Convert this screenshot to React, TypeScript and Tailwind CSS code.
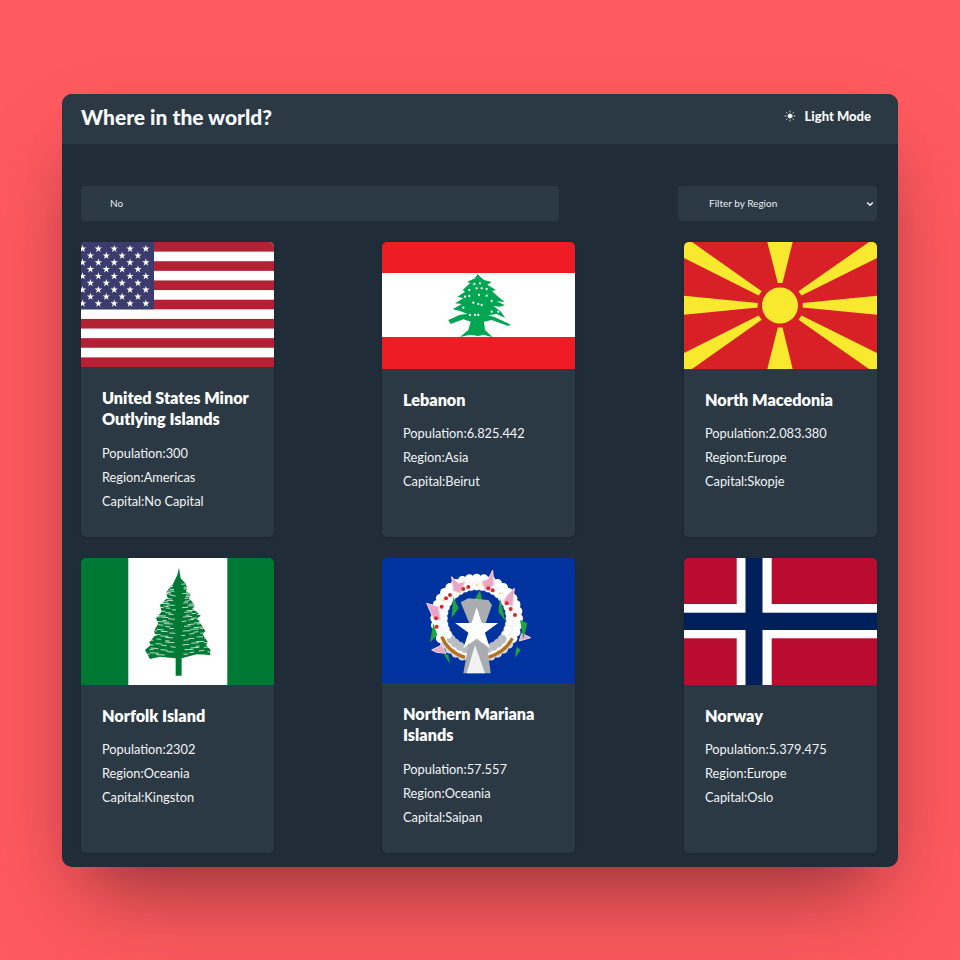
import React from "react";

const font = "[font-family:Lato,'Noto_Sans',sans-serif]";

function star(cx: number, cy: number, r: number) {
  const pts: string[] = [];
  for (let i = 0; i < 10; i++) {
    const rad = i % 2 === 0 ? r : r * 0.382;
    const a = -Math.PI / 2 + (i * Math.PI) / 5;
    pts.push(`${(cx + rad * Math.cos(a)).toFixed(2)},${(cy + rad * Math.sin(a)).toFixed(2)}`);
  }
  return pts.join(" ");
}

function FlagUS() {
  const h = 125 / 13;
  const stars: React.ReactNode[] = [];
  for (let row = 0; row < 9; row++) {
    const cols = row % 2 === 0 ? 6 : 5;
    for (let c = 0; c < cols; c++) {
      const x = (row % 2 === 0 ? -14.3 : -6.4) + c * 15.83;
      stars.push(<polygon key={`${row}-${c}`} points={star(x, 6.83 + row * 6.83, 3.9)} fill="#fff" />);
    }
  }
  return (
    <svg viewBox="0 0 193 125" className="block h-[125px] w-[193px]">
      <rect width="193" height="125" fill="#fff" />
      {Array.from({ length: 7 }).map((_, i) => (
        <rect key={i} y={i * 2 * h} width="193" height={h} fill="#b22234" />
      ))}
      <rect width="73" height="67.3" fill="#3c3b6e" />
      {stars}
    </svg>
  );
}

function FlagLebanon() {
  const dots = [
    [283, 132], [300, 130], [268, 150], [290, 145], [305, 145], [320, 147], [255, 170], [268, 168], [297, 165], [320, 167], [335, 183],
    [280, 188], [295, 192], [305, 195], [250, 203], [335, 215], [355, 215], [270, 225], [285, 225], [295, 225],
  ];
  return (
    <svg viewBox="0 0 193 127" className="block h-[127px] w-[193px]">
      <rect width="193" height="127" fill="#ee1c25" />
      <rect y="31" width="193" height="64" fill="#fff" />
      <g transform="translate(-2 -2) scale(.3333)">
        <path
          d="M293 102L302 112L312 120L335 126L322 134L348 150L336 153L352 168L374 186L350 184L375 196L358 200L340 198L362 214L376 234L350 222L325 226L345 232L392 254L385 258L335 240L312 245L315 270L338 292L310 284L295 288L270 284L240 291L265 270L272 245L250 238L212 252L205 240L240 224L262 222L238 212L218 208L245 192L225 190L250 175L232 170L255 155L248 150L270 130L262 125L285 115Z"
          fill="#00a651"
        />
        {dots.map(([x, y], i) => (
          <circle key={i} cx={x} cy={y} r="3.4" fill="#fff" />
        ))}
      </g>
    </svg>
  );
}

function FlagMacedonia() {
  const rays = [
    "83.3,0 108.7,0 98.5,41 93.8,41",
    "83.3,127 108.7,127 98.5,85.5 93.8,85.5",
    "0,53.7 73.7,61 73.7,65.5 0,72.7",
    "193,53.7 118.7,61 118.7,65.5 193,72.7",
    "0,16 0,0 8,0 77.7,49.3 74.7,53.5",
    "193,16 193,0 185,0 114.5,49.3 117.5,53.5",
    "0,111 0,127 8,127 77.7,77.7 74.7,73.5",
    "193,111 193,127 185,127 114.5,77.7 117.5,73.5",
  ];
  return (
    <svg viewBox="0 0 193 127" className="block h-[127px] w-[193px]">
      <rect width="193" height="127" fill="#d82126" />
      {rays.map((p, i) => (
        <polygon key={i} points={p} fill="#f8e92e" />
      ))}
      <circle cx="96" cy="63.5" r="18" fill="#f8e92e" />
    </svg>
  );
}

function FlagNorfolk() {
  const flecks: React.ReactNode[] = [];
  const cx = 296;
  let n = 0;
  for (let y = 88; y < 305; y += 7) {
    const t = (y - 38) / (300 - 38);
    const w = 100 * t;
    for (let k = 0; k < 4; k++) {
      const seed = (n * 37) % 11;
      const a = 8 + k * 0.24 * w + seed;
      const b = a + 12 + ((seed * 3) % 16);
      const side = n % 2 === 0 ? 1 : -1;
      const tilt = 1 + (seed % 2);
      flecks.push(
        <path
          key={n}
          d={`M${cx + side * a} ${y + (k % 3) * 2}L${cx + side * b} ${y + (k % 3) * 2 - tilt}`}
          stroke="#fff"
          strokeWidth="2.2"
          fill="none"
        />
      );
      n++;
    }
    n++;
  }
  return (
    <svg viewBox="0 0 193 127" className="block h-[127px] w-[193px]">
      <rect width="193" height="127" fill="#007934" />
      <rect x="47.3" width="99" height="127" fill="#fff" />
      <g transform="translate(-1 -3) scale(.3333)">
        <path
          d="M297 38L302 70L316 85L322 100L318 108L332 118L328 130L345 152L338 160L362 182L352 190L376 228L368 238L384 262L378 270L392 285L390 300L350 298L305 310L305 362L287 362L287 310L240 305L210 312L195 285L212 270L208 262L226 240L222 228L235 205L228 190L245 170L240 150L262 128L258 112L280 85L292 60Z"
          fill="#007934"
        />
        {flecks}
      </g>
    </svg>
  );
}

function FlagMariana() {
  const outer: React.ReactNode[] = [];
  const inner: React.ReactNode[] = [];
  const cx = 170;
  const cy = 160;
  for (let i = 0; i < 36; i++) {
    const a = (i / 36) * Math.PI * 2;
    const gray = Math.sin(a) > 0.55;
    outer.push(
      <circle key={i} cx={cx + 125 * Math.cos(a)} cy={cy + 120 * Math.sin(a)} r="14" fill={gray ? "#d3d6da" : "#fff"} />
    );
    inner.push(
      <circle key={i} cx={cx + 100 * Math.cos(a)} cy={cy + 97 * Math.sin(a)} r="13" fill={gray ? "#b9bdc2" : "#fff"} stroke="#c8d0da" strokeWidth="1" />
    );
  }
  const flowers = [
    "95,35 115,55 135,50 122,85 100,78",
    "218,15 222,60 198,78 185,50 205,42",
    "20,115 55,125 62,165 40,160",
    "283,70 278,125 250,110 262,90",
    "35,255 65,240 78,265 50,262",
    "305,205 332,218 298,228",
  ];
  const leaves = [
    "40,175 30,232 52,210",
    "100,95 95,158 116,130",
    "180,75 155,120 186,105",
    "240,100 235,140 256,168",
    "300,165 310,222 322,175",
    "290,245 285,278 302,255",
    "70,265 90,298 85,270",
  ];
  const reds = [
    [145, 66], [130, 72], [205, 70], [218, 76], [90, 90], [78, 100], [65, 125], [48, 160], [50, 185], [260, 115], [285, 150], [272, 132],
  ];
  const yellow = [
    [120, 80], [170, 60], [190, 60], [240, 85], [70, 105],
  ];
  return (
    <svg viewBox="0 0 193 125" className="block h-[125px] w-[193px]">
      <rect width="193" height="125" fill="#0032a0" />
      <g transform="translate(38 7) scale(.3333)">
        {outer}
        <ellipse cx={cx} cy={cy} rx="112" ry="108" fill="none" stroke="#fff" strokeWidth="26" />
        {inner}
        {flowers.map((p, i) => (
          <polygon key={i} points={p} fill="#eaa6c6" stroke="#f6d6e6" strokeWidth="3" />
        ))}
        {leaves.map((p, i) => (
          <polygon key={i} points={p} fill="#1fa53a" />
        ))}
        {reds.map(([x, y], i) => (
          <circle key={i} cx={x} cy={y} r="6" fill="#d9262c" />
        ))}
        {yellow.map(([x, y], i) => (
          <circle key={i} cx={x} cy={y} r="3" fill="#f5d94a" />
        ))}
        <path d="M65 215Q85 262 135 277" fill="none" stroke="#b5701f" strokeWidth="10" />
        <path d="M277 220Q255 262 205 277" fill="none" stroke="#b5701f" strokeWidth="10" />
        <path d="M122 112L145 100L205 105L216 120L195 180L150 180Z" fill="#a9adb1" />
        <path d="M150 215L198 215L212 325L130 325Z" fill="#a9adb1" />
        <path d="M165 240L195 325L140 325Z" fill="#f2f2f2" />
        <polygon points={star(170, 195, 68)} fill="#fff" />
      </g>
    </svg>
  );
}

function FlagNorway() {
  return (
    <svg viewBox="0 0 193 127" className="block h-[127px] w-[193px]">
      <rect width="193" height="127" fill="#ba0c2f" />
      <rect x="52.7" width="35" height="127" fill="#fff" />
      <rect y="46" width="193" height="34.3" fill="#fff" />
      <rect x="61.5" width="17" height="127" fill="#00205b" />
      <rect y="54.7" width="193" height="17.3" fill="#00205b" />
    </svg>
  );
}

type C = { flag: React.ReactNode; name: string; pop: string; region: string; capital: string };

const countries: C[] = [
  { flag: <FlagUS />, name: "United States Minor Outlying Islands", pop: "300", region: "Americas", capital: "No Capital" },
  { flag: <FlagLebanon />, name: "Lebanon", pop: "6.825.442", region: "Asia", capital: "Beirut" },
  { flag: <FlagMacedonia />, name: "North Macedonia", pop: "2.083.380", region: "Europe", capital: "Skopje" },
  { flag: <FlagNorfolk />, name: "Norfolk Island", pop: "2302", region: "Oceania", capital: "Kingston" },
  { flag: <FlagMariana />, name: "Northern Mariana Islands", pop: "57.557", region: "Oceania", capital: "Saipan" },
  { flag: <FlagNorway />, name: "Norway", pop: "5.379.475", region: "Europe", capital: "Oslo" },
];

function Card({ c }: { c: C }) {
  return (
    <article className="h-[295px] w-[193px] overflow-hidden rounded-[5px] bg-[#2b3945] shadow-sm">
      {c.flag}
      <div className="px-[21px] pt-[19.5px]">
        <h2 className="mb-[11px] text-[16.2px] leading-[21.5px] font-extrabold text-white">{c.name}</h2>
        <p className="text-[12.8px] leading-[24px] text-[#f2f4f6]">Population:{c.pop}</p>
        <p className="text-[12.8px] leading-[24px] text-[#f2f4f6]">Region:{c.region}</p>
        <p className="text-[12.8px] leading-[24px] text-[#f2f4f6]">Capital:{c.capital}</p>
      </div>
    </article>
  );
}

export default function App() {
  return (
    <div className={`flex min-h-screen items-center justify-center bg-[#ff5a5f] ${font}`}>
      <div className="h-[773px] w-[836px] overflow-hidden rounded-[10px] bg-[#202c37] shadow-[0_50px_100px_-20px_rgba(0,0,0,0.26),0_30px_60px_-30px_rgba(0,0,0,0.32)]">
        <header className="flex h-[50.5px] items-center justify-between bg-[#2b3945] pb-[5px] pl-[19px] pr-[27px]">
          <h1 className="text-[21px] font-black text-[#f8f9fa]">Where in the world?</h1>
          <div className="flex items-center gap-[9px] text-[#f8f9fa]">
            <svg viewBox="0 0 24 24" className="h-[12px] w-[12px]" fill="none" stroke="currentColor" strokeWidth="1.6" strokeLinecap="round">
              <circle cx="12" cy="12" r="4" fill="currentColor" />
              <path d="M12 2v2M12 20v2M4.9 4.9l1.4 1.4M17.7 17.7l1.4 1.4M2 12h2M20 12h2M6.3 17.7l-1.4 1.4M19.1 4.9l-1.4 1.4" />
            </svg>
            <span className="text-[13px] font-black">Light Mode</span>
          </div>
        </header>
        <main className="pl-[19px] pr-[21px] pt-[42px]">
          <div className="mb-[21px] flex items-center justify-between">
            <input
              readOnly
              value="No"
              className="h-[35px] w-[478px] rounded-[4px] bg-[#2b3945] pb-[1px] pl-[29px] text-[10px] text-[#e8edf2] outline-none"
            />
            <div className="relative h-[35px] w-[199px]">
              <select className="h-full w-full appearance-none rounded-[4px] bg-[#2b3945] pb-[1px] pl-[31px] text-[10px] text-[#e8edf2] outline-none">
                <option>Filter by Region</option>
              </select>
              <svg viewBox="0 0 8 6" className="pointer-events-none absolute right-[3px] top-[15px] h-[6px] w-[8px]" fill="none" stroke="#f2f4f6" strokeWidth="1.5">
                <path d="M1.2 1.5L4 4.3L6.8 1.5" />
              </svg>
            </div>
          </div>
          <div className="grid grid-cols-[301px_302px_193px] gap-y-[21px]">
            {countries.map((c) => (
              <Card key={c.name} c={c} />
            ))}
          </div>
        </main>
      </div>
    </div>
  );
}
